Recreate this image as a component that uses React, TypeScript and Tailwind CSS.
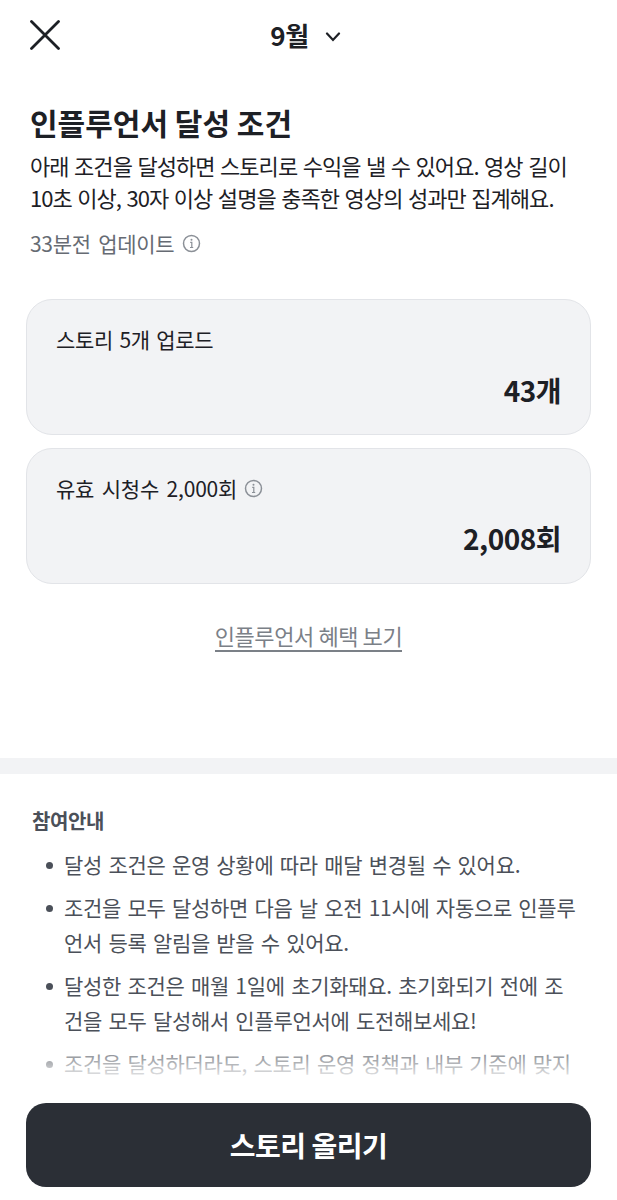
const font = { fontFamily: '"Noto Sans CJK KR", Roboto, sans-serif' };

const InfoIcon = () => (
    <svg width="19" height="19" viewBox="0 0 19 19" fill="none" className="shrink-0">
        <circle cx="9.5" cy="9.5" r="8" stroke="#8b9097" strokeWidth="1.5" />
        <circle cx="9.5" cy="5.8" r="1" fill="#8b9097" />
        <path d="M8.2 8.4h1.6v5M8 13.5h3.2" stroke="#8b9097" strokeWidth="1.2" />
    </svg>
);

const notes = [
    "달성 조건은 운영 상황에 따라 매달 변경될 수 있어요.",
    "조건을 모두 달성하면 다음 날 오전 11시에 자동으로 인플루언서 등록 알림을 받을 수 있어요.",
    "달성한 조건은 매월 1일에 초기화돼요. 초기화되기 전에 조건을 모두 달성해서 인플루언서에 도전해보세요!",
    "조건을 달성하더라도, 스토리 운영 정책과 내부 기준에 맞지 않으면 인플루언서가 될 수 없어요.",
];

const App = () => {
    return (
        <div className="relative h-[1200px] w-[617px] overflow-hidden bg-white text-[#1d2025]" style={font}>
            <header className="relative flex h-[70px] items-center justify-center">
                <button className="absolute left-[30px] top-[20px]">
                    <svg width="30" height="30" viewBox="0 0 30 30" fill="none">
                        <path d="M1.5 1.5l27 27M28.5 1.5l-27 27" stroke="#1d2025" strokeWidth="2.8" strokeLinecap="round" />
                    </svg>
                </button>
                <div className="flex items-center gap-[16px] pr-[6px]">
                    <span className="text-[26px] font-bold leading-none tracking-[-0.3px]">9월</span>
                    <svg width="16" height="10" viewBox="0 0 16 10" fill="none" className="mt-[3px]">
                        <path d="M2 1.5l6 6.5 6-6.5" stroke="#1d2025" strokeWidth="2.2" strokeLinecap="round" />
                    </svg>
                </div>
            </header>

            <section className="px-[30px] pt-[30px]">
                <h1 className="text-[30px] font-bold leading-[44px]">인플루언서 달성 조건</h1>
                <p className="mt-[5px] text-[22px] leading-[32px] tracking-[-0.95px] whitespace-nowrap [word-spacing:1.5px]">
                    아래 조건을 달성하면 스토리로 수익을 낼 수 있어요. 영상 길이
                    <br />
                    10초 이상, 30자 이상 설명을 충족한 영상의 성과만 집계해요.
                </p>
                <div className="mt-[14px] flex items-center gap-[8px] text-[#666b73]">
                    <span className="text-[21px] leading-[32px] tracking-[-0.3px] [word-spacing:3px]">33분전 업데이트</span>
                    <InfoIcon />
                </div>
            </section>

            <section className="mt-[40px] flex flex-col gap-[13px] px-[26px]">
                <div className="h-[136px] rounded-[26px] border border-[#e2e4e8] bg-[#f2f3f5] px-[29px] pt-[23px]">
                    <div className="text-[21px] leading-[32px] tracking-[-0.3px] [word-spacing:2px]">스토리 5개 업로드</div>
                    <div className="mt-[15px] text-right text-[28px] font-bold leading-[40px] tracking-[-0.5px]">43개</div>
                </div>
                <div className="h-[136px] rounded-[26px] border border-[#e2e4e8] bg-[#f2f3f5] px-[29px] pt-[23px]">
                    <div className="flex items-center gap-[7px] text-[21px] leading-[32px] tracking-[-0.2px] [word-spacing:3px]">
                        유효 시청수 2,000회
                        <InfoIcon />
                    </div>
                    <div className="mt-[14px] text-right text-[28px] font-bold leading-[40px] tracking-[-0.5px]">2,008회</div>
                </div>
            </section>

            <div className="mt-[36px] flex justify-center">
                <a className="border-b-2 border-[#7b8087] text-[22px] leading-[30px] tracking-[-0.4px] text-[#7b8087]">인플루언서 혜택 보기</a>
            </div>

            <div className="mt-[106px] h-[16px] bg-[#f2f3f5]" />

            <section className="px-[32px] pt-[32px] text-[#4b5059]">
                <h2 className="text-[20px] font-bold leading-[30px] tracking-[-0.4px]">참여안내</h2>
                <ul className="mt-[11px] flex flex-col gap-[8px] pl-[14px] pr-[5px]">
                    {notes.map((note) => (
                        <li key={note} className="flex gap-[11px] text-[21px] leading-[35px] tracking-[-0.3px] [word-spacing:2px]">
                            <span className="mt-[15px] h-[7px] w-[7px] shrink-0 rounded-full bg-[#4b5059]" />
                            <span>{note}</span>
                        </li>
                    ))}
                </ul>
            </section>

            <div className="absolute inset-x-0 bottom-0 h-[165px] bg-gradient-to-b from-white/0 from-0% to-white to-30%" />
            <button className="absolute left-[26px] top-[1103px] flex h-[84px] w-[565px] items-center justify-center rounded-[20px] bg-[#2b2f36] text-[28px] font-bold tracking-[-0.5px] text-white">
                스토리 올리기
            </button>
        </div>
    );
};

export default App;
